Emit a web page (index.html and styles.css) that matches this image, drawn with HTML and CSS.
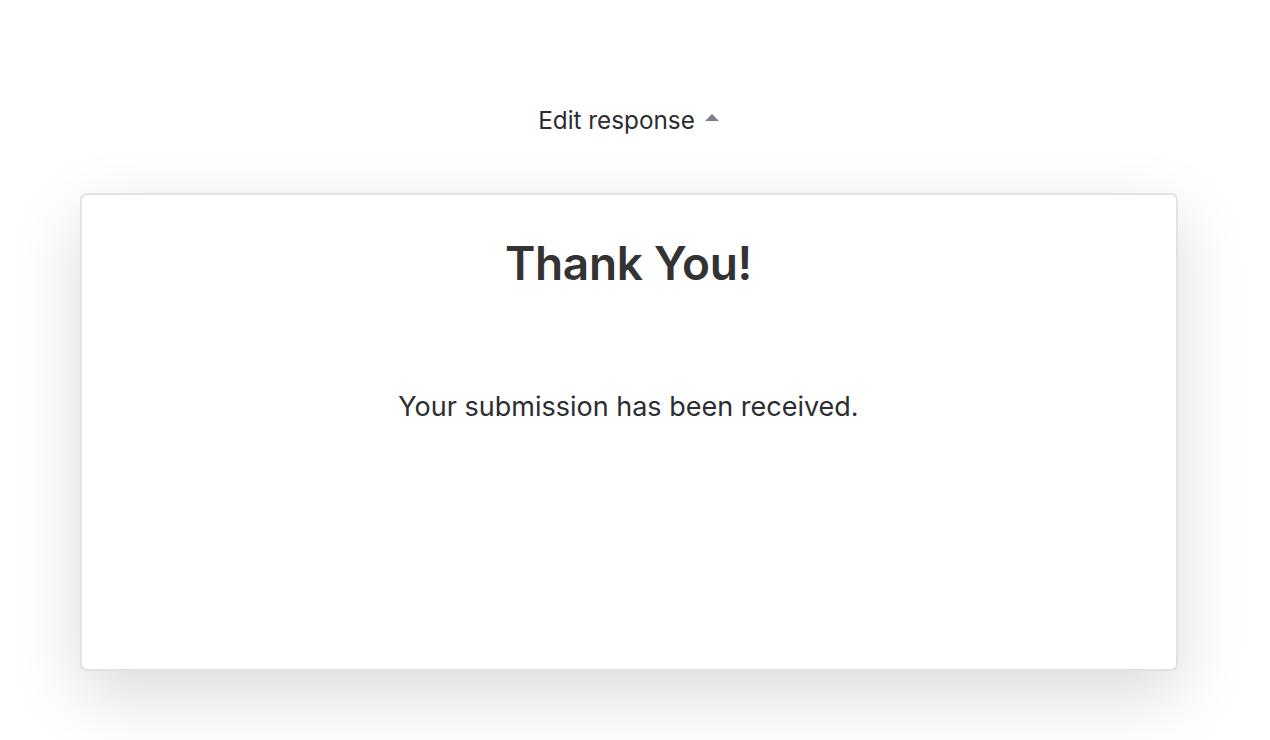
FILE: index.html
```html
<!DOCTYPE html>
<html lang="en">
<head>
<meta charset="utf-8">
<title>Thank You</title>
<link rel="stylesheet" href="styles.css">
</head>
<body>
  <div class="page">
    <div class="edit-row">
      <button class="edit-btn" type="button">Edit response <span class="caret"></span></button>
    </div>
    <div class="card">
      <h1 class="title">Thank You!</h1>
      <p class="message">Your submission has been received.</p>
    </div>
  </div>
</body>
</html>
```
FILE: styles.css
```css
html, body {
  margin: 0;
  padding: 0;
  background: #ffffff;
}
body {
  font-family: Inter, "Noto Sans", "Liberation Sans", sans-serif;
  color: #2c2d33;
  padding-right: 13px;
  overflow: hidden;
}
.page {
  width: 1098px;
  margin: 0 auto;
  padding-top: 102px;
  padding-bottom: 69px;
}
.edit-row {
  display: flex;
  justify-content: center;
  height: 91px;
}
.edit-btn {
  display: flex;
  align-items: center;
  gap: 10px;
  height: 36px;
  padding: 0;
  border: none;
  background: none;
  font-family: inherit;
  font-size: 24.3px;
  color: #2c2d33;
  cursor: pointer;
}
.caret {
  width: 0;
  height: 0;
  border-left: 7px solid transparent;
  border-right: 7px solid transparent;
  border-bottom: 7px solid #7d818b;
  margin-top: -6px;
}
.card {
  box-sizing: border-box;
  height: 478px;
  border: 2px solid #e2e2e2;
  border-radius: 7px;
  background: #ffffff;
  box-shadow: 0 24px 70px rgba(0, 0, 0, 0.15);
  display: flex;
  flex-direction: column;
  align-items: center;
}
.title {
  margin: 37px 0 0;
  font-size: 46px;
  font-weight: 600;
  color: #333333;
  line-height: 62px;
  letter-spacing: -0.3px;
}
.message {
  margin: 95px 0 0;
  font-size: 27px;
  line-height: 36px;
  color: #2c2d33;
}
```
